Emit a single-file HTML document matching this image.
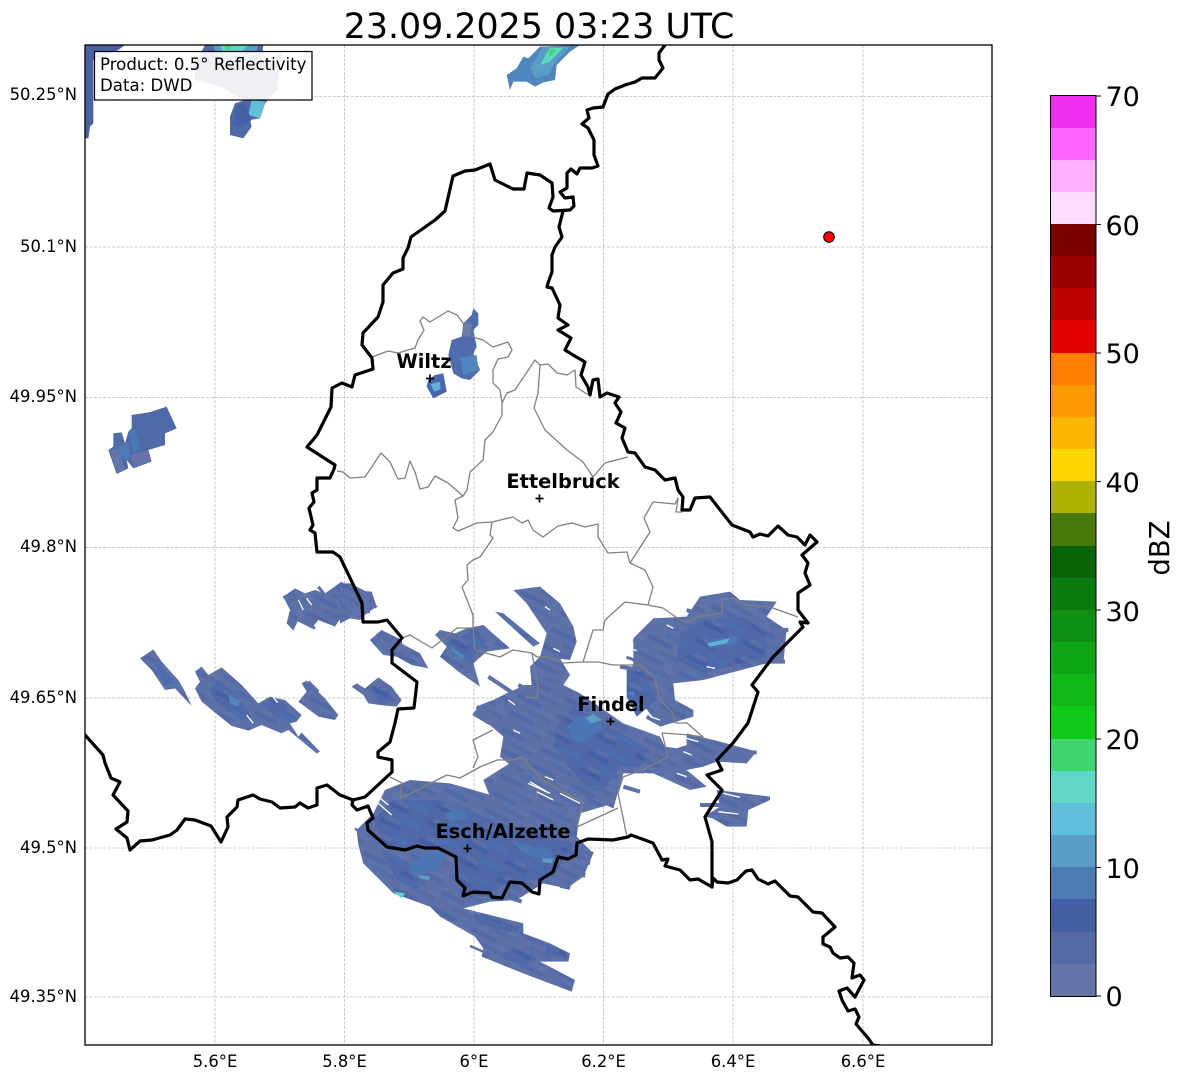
<!DOCTYPE html>
<html><head><meta charset="utf-8"><style>
html,body{margin:0;padding:0;background:#fff;width:1184px;height:1081px;overflow:hidden}
svg{display:block}
text{font-family:"DejaVu Sans","Liberation Sans",sans-serif;fill:#000}
</style></head><body>
<svg width="1184" height="1081" viewBox="0 0 1184 1081" xmlns="http://www.w3.org/2000/svg">
<defs><clipPath id="c"><rect x="85" y="45" width="907" height="1000"/></clipPath>
<pattern id="t" patternUnits="userSpaceOnUse" width="132" height="56" patternTransform="rotate(27)">
<rect width="132" height="56" fill="#5c71a8"/>
<rect x="0" y="0" width="80" height="14" fill="#5369a7"/>
<rect x="50" y="28" width="70" height="14" fill="#556ba6"/>
<rect x="100" y="14" width="30" height="14" fill="#6274a8"/>
</pattern>
<pattern id="d" patternUnits="userSpaceOnUse" width="132" height="56" patternTransform="rotate(27)">
<rect width="132" height="56" fill="#5068a7"/>
<rect x="0" y="0" width="70" height="14" fill="#4660a5"/>
<rect x="60" y="28" width="60" height="14" fill="#4a6fb0"/>
<rect x="20" y="42" width="40" height="14" fill="#5a6fa8"/>
</pattern>
</defs>
<rect width="1184" height="1081" fill="#fff"/>
<text x="539" y="38" font-size="34.800" text-anchor="middle">23.09.2025 03:23 UTC</text>
<g clip-path="url(#c)">
<!-- grid -->
<g stroke="#bbb" stroke-width=".8" stroke-dasharray="3 1.5" fill="none">
<path d="M215 45V1045M344.500 45V1045M474 45V1045M603.500 45V1045M733 45V1045M863 45V1045"/>
<path d="M85 96.500H992M85 247H992M85 397.500H992M85 547.500H992M85 698H992M85 848H992M85 997H992"/>
</g>
<!-- radar: top -->
<g transform="translate(85,40) scale(.33333)">
<path fill="#4a62a4" d="M0 15H120L100 30L25 60V250L15 260L10 295H0Z"/>
<path fill="#4f68a6" d="M360 15H535L530 60L590 40L575 150L540 190L525 235L495 240L500 260L475 295L435 285L435 230L450 190L480 180L440 160L410 140L330 120L330 70Z"/>
<path fill="#5a9dc5" d="M385 15H520L500 70L450 80L400 60Z"/>
<path fill="#60d6c5" d="M405 15H490L460 45L420 50Z"/>
<path fill="#3fd672" d="M412 15H445L430 32Z"/>
<path fill="#62bfdb" d="M500 180L540 185L525 235L490 225Z"/>
<path fill="#4460a6" d="M455 195L480 190L500 240L470 262L440 255Z"/>
</g>
<g transform="translate(340,45) scale(.33333)">
<path fill="#4f86bd" d="M600 5L720 0L690 20L650 60L645 105L610 112L585 125L560 110L520 110L510 135L500 90L530 70L550 35L565 40L590 15Z"/>
<path fill="#5a9dc5" d="M610 5L690 5L640 60L625 90L585 100L570 70Z"/>
<path fill="#60d6c5" d="M630 8L670 8L630 50L600 60Z"/>
<path fill="#3fd672" d="M630 12L650 15L625 38Z"/>
</g>
<!-- radar: wiltz / ettelbruck -->
<g transform="translate(300,290) scale(.33333)">
<path fill="#4f6cac" d="M520 55L535 70L535 105L520 120L530 170L520 190L540 240L510 270L485 265L460 250L445 195L455 150L485 140L490 100L515 75Z"/>
<path fill="#6a80ae" d="M490 100H515L510 140H488Z"/>
<path fill="#4f86bd" d="M480 205L530 195L535 240L490 255Z"/>
<path fill="#4a66ac" d="M405 255L430 250L440 305L400 325L380 290L385 270Z"/>
<path fill="#62b0d8" d="M392 282L420 275L422 298L402 305Z"/>
</g>
<!-- radar: left -->
<g transform="translate(85,400) scale(.33333)">
<path fill="#5069a8" d="M70 150L85 140L85 100L110 97L120 130L130 95L140 85L140 45L190 37L200 35L245 20L275 85L240 100L240 135L190 150L200 185L145 205L125 180L130 205L95 222Z"/>
<path fill="#4a7bb6" d="M100 140L130 130L135 175L110 180Z"/>
<path fill="#4a7bb6" d="M130 95L150 88L165 150L145 158Z"/>
<path fill="#6274a8" d="M75 150L100 145L120 210L95 218Z"/>
<path fill="#6274a8" d="M135 165L190 150L198 185L145 203Z"/>
</g>
<g transform="translate(85,560) scale(.33333)" fill="url(#t)">
<path d="M595 110L630 85L660 100L690 90L720 100L770 65L800 90L860 95L875 140L840 150L830 180L790 140L750 200L700 180L680 205L640 180L625 212L605 190L615 150Z"/>
<path d="M165 295L205 268L230 305L280 360L300 395L320 438L270 385L240 390L200 330Z"/>
<path d="M330 335L350 320L370 345L410 322L470 375L520 430L555 410L600 420L650 465L635 485L615 490L640 530L650 518L705 575L695 580L610 510L590 520L530 495L490 512L440 498L350 425L330 385L345 365Z"/>
<path d="M650 370L665 362L720 415L760 465L750 480L700 470L640 425L665 395Z"/>
<path d="M800 380L815 370L840 385L880 352L920 380L950 420L935 440L885 435L850 430L835 405Z"/>
<path d="M855 240L890 210L950 240L960 290L920 285L895 285Z"/>
<path fill="url(#d)" d="M400 360L450 400L500 470L470 480L400 430L370 390Z"/>
<path fill="#4f86bd" d="M430 405L465 420L460 440L435 430Z"/>
<path fill="url(#d)" d="M530 430L560 420L640 475L620 485L570 470Z"/>
<path fill="url(#d)" d="M210 310L240 330L270 370L240 375Z"/>
<path fill="url(#d)" d="M860 380L900 375L930 425L880 425Z"/>
<path stroke="#fff" stroke-width="4" fill="none" d="M780 105L790 125M640 120L655 150M665 115L680 135M485 465L505 490M560 405L578 428"/>
<path stroke="#5c71a8" stroke-width="9" fill="none" d="M596 108L640 160M625 92L660 130M700 80L735 125M640 180L690 205M815 160L855 155M850 125L875 142M670 365L700 395"/>
</g>
<!-- radar: Esch bridge (under central) -->
<g transform="translate(350,780) scale(.33333)">
<path fill="url(#t)" d="M495 -60L790 70L690 100L680 170L540 60L420 50L400 0Z"/>
</g>
<!-- radar: central and east -->
<g transform="translate(340,560) scale(.33333)" fill="url(#t)">
<path d="M0 70L30 70L80 95L110 140L80 160L60 180L30 175L0 190Z"/>
<path d="M90 240L125 210L165 240L240 280L265 325L215 315L170 290L130 285Z"/>
<path d="M285 225L300 210L345 220L380 205L430 195L510 265L440 275L400 310L420 380L355 335L300 290L320 260Z"/>
<path fill="url(#d)" d="M320 250L400 210L440 240L390 300L340 290Z"/>
<path fill="#4f86bd" d="M335 260L375 290L365 298L330 270Z"/>
<path d="M520 90L600 80L660 130L700 200L710 245L690 300L600 290L620 220L560 130Z"/>
<path d="M465 155L490 160L600 250L580 260Z"/>
<path d="M460 420L500 400L555 375L575 375L570 320L600 290L660 295L690 345L670 375L720 400L850 490L960 530L975 560L1010 565L1040 555L1040 520L1140 545L1250 575L1220 610L1130 605L1090 620L1040 630L1100 680L1050 690L940 640L850 640L820 745L720 700L660 690L600 660L530 630L480 590L490 530L420 470L400 460L420 435Z"/>
<path d="M880 235L940 175L1040 170L1080 110L1170 95L1200 120L1310 125L1280 170L1340 210L1330 310L1280 310L1090 360L1000 370L1005 420L1060 450L1060 470L960 500L860 370L880 310Z"/>
<path d="M1130 690L1290 710L1290 720L1225 750L1220 800L1160 800L1100 765L1140 740Z"/>
<path fill="url(#d)" d="M650 500L700 440L760 470L930 570L900 620L840 620L790 690L740 690L640 560Z"/>
<path fill="#4a76b4" d="M680 500L720 465L780 480L790 505L730 545L700 540Z"/>
<path fill="#5a9dc5" d="M735 475L760 462L785 480L755 490Z"/>
<path fill="url(#d)" d="M1020 220L1080 180L1210 170L1280 220L1280 290L1090 340L1010 300Z"/>
<path fill="#4a76b4" d="M1095 240L1200 225L1190 250L1110 265Z"/>
<path fill="#62b0d8" d="M1100 250L1170 235L1160 250L1110 260Z"/>
<path fill="url(#d)" d="M860 330L900 320L950 420L890 470L860 410Z"/>
<path fill="#4f86bd" d="M865 395L885 395L880 410Z"/>
<path stroke="#5c71a8" stroke-width="12" fill="none" d="M410 440L470 475M400 460L450 490M445 350L520 400M535 375L590 400M640 370L720 410M1040 535L1150 565M1140 572L1250 578M1080 735L1140 735M1100 765L1220 790M850 680L900 695M840 320L900 330M880 240L960 270M860 290L960 330M940 180L1040 210M1040 150L1100 170M1280 210L1345 210M1280 245L1320 245M1290 305L1335 305M920 470L965 495M720 900L750 910M720 935L735 945M660 970L690 985M500 1010L545 1025M660 745L700 760"/>
<path stroke="#fff" stroke-width="4" fill="none" d="M570 665L620 695M615 650L640 660M915 640L970 655M1010 640L1040 650M1150 700L1200 712M1135 755L1195 762M1040 535L1075 545M1030 575L1055 585M930 470L960 480M868 265L890 272M860 285L880 292M1100 320L1125 325M980 195L1000 205M505 420L525 435M520 510L540 520M615 140L630 150M640 265L660 275"/>
</g>
<!-- radar: Esch -->
<g transform="translate(350,780) scale(.33333)">
<path fill="url(#t)" d="M105 30L180 0L300 10L440 50L470 0L540 20L680 170L730 220L700 290L650 325L580 310L500 360L420 365L340 385L520 430L520 460L600 490L660 520L655 545L570 545L675 600L665 635L545 590L395 530L400 505L375 470L270 410L240 380L130 340L40 250L25 195L20 150L70 100Z"/>
<path fill="url(#d)" d="M70 120L130 60L270 60L450 130L670 190L610 290L470 310L400 350L340 340L310 230L250 200L160 210L100 190Z"/>
<path fill="#4a76b4" d="M280 100L340 85L360 115L300 125ZM480 180L600 215L610 250L520 220ZM230 220L290 215L260 270L180 290L170 265Z"/>
<path fill="#5a9dc5" d="M580 235L610 235L605 250L575 245ZM205 285L240 290L235 300L210 295Z"/>
<path fill="#60d6c5" d="M130 335L165 340L155 355Z"/>
<path fill="url(#d)" d="M100 225L170 240L210 330L140 300ZM370 400L510 440L500 460L380 430ZM440 520L560 500L530 560L470 540ZM590 490L650 515L650 540L585 520Z"/>
<path stroke="#5c71a8" stroke-width="7" fill="none" d="M360 498L400 515M15 145L50 175M680 200L730 220M690 240L720 250M680 280L705 290M630 320L655 325"/>
<path stroke="#fff" stroke-width="4" fill="none" d="M535 10L600 40M560 35L610 60M630 40L690 70M85 50L115 75M85 70L125 105"/>
</g>
<!-- district lines -->
<g fill="none" stroke="#808080" stroke-width="1.300" stroke-linejoin="round">
<path d="M372 357L388 351L398 353L415 348L418 340L424 330L420 321L423 317L430 322L448 311L457 315L463 323L473 337L483 340L493 347L508 342L512 350L508 357L498 359L493 370L493 383L500 390L502 403L502 415L493 432L485 440L483 460L470 472L467 490L463 496L455 500L458 518L453 528L458 531L477 523L492 522L513 517L522 523L528 520L533 530L543 537L558 526L572 523L585 527L598 524L598 537L608 553L627 552L630 563L645 570L653 587L648 605L625 602L605 620L603 630L593 630L583 662L563 663L548 657L537 657L532 653L513 650L500 657L475 650L473 628L473 615L462 587L468 580L467 565L473 560L480 557L493 538L490 535L492 522"/>
<path d="M502 403L507 393L515 390L535 360L540 365L548 364L557 373L567 375L575 370L576 387L587 394L591 394"/>
<path d="M540 365L538 393L534 408L545 430L567 450L583 462L593 477L605 463L628 457"/>
<path d="M337 471L343 472L350 478L365 477L381 453L390 462L398 479L405 478L410 461L415 472L420 489L428 487L435 476L448 483L463 496"/>
<path d="M630 563L650 532L644 518L653 502L675 504L678 498L676 512L682 512"/>
<path d="M648 605L663 608L680 620L687 623L697 617L722 613L722 600L733 598L747 605L770 607L798 617"/>
<path d="M473 628L457 628L432 648L410 635L402 638"/>
<path d="M583 662L598 662L613 665L640 665L655 678L660 700L673 713L675 723L687 723L703 737L690 735L662 733L668 757L642 770L623 777L618 793L627 837"/>
<path d="M618 808L577 827L583 803L543 780L522 757L513 760L497 760L480 767L460 778L447 775L427 785L412 793L400 798L402 783L390 777"/>
<path d="M532 653L538 687L537 698L525 697"/>
<path d="M493 730L473 740L478 757L473 768"/>
</g>
<!-- national borders -->
<g fill="none" stroke="#000" stroke-width="3.200" stroke-linejoin="round" stroke-linecap="round">
<path d="M665 45L659 53L659 60L663 68L655 78L642 78L635 82L625 85L615 89L608 94L603 107L593 108L587 110L589 118L582 124L588 128L594 140L594 155L598 166L592 168L580 168L577 174L571 169L567 173L567 188L560 192L565 198L573 197L574 206L570 210L553 211L549 208L553 197L552 183L540 175L527 173L524 189L513 189L495 180L490 164L475 170L465 171L453 176L445 211L435 220L411 237L408 248L403 258L403 269L393 273L383 285L383 302L378 317L363 333L362 345L372 358L373 369L355 375L352 387L342 383L332 388L331 407L317 435L307 447L335 465L334 469L330 478L317 478L317 490L312 493L314 502L309 508L313 525L310 530L315 533L317 552L333 552L340 557L362 603L363 622L378 622L387 620L402 638L392 650L392 663L417 682L414 708L398 709L395 723L390 742L378 752L378 757L392 760L392 772L365 797L353 800L340 795L327 785L317 788L317 805L308 808L300 803L295 807L280 808L272 802L260 799L253 795L238 800L237 807L227 817L228 827L221 842L211 826L195 820L185 819L177 830L170 835L152 840L140 841L130 850L127 838L116 829L127 822L128 811L113 795L120 782L111 778L105 763L103 755L85 735"/>
<path d="M353 800L352 805L357 810L368 806L373 818L367 823L368 830L387 847L405 850L417 846L425 848L438 848L456 857L457 880L465 888L463 896L473 892L490 893L492 897L502 898L510 882L522 883L532 892L539 894L540 880L553 872L558 857L568 859L576 855L577 843L588 839L613 840L628 837L631 835L653 843L662 860L668 859L665 866L680 870L690 880L698 879L712 887L713 878L717 882L728 883L737 880L746 871L752 870L758 879L768 884L775 881L790 896L798 897L813 912L822 913L835 927L823 937L823 944L830 947L833 953L840 958L848 957L854 963L852 978L860 975L864 980L855 997L847 988L839 991L842 1000L848 1011L855 1009L859 1017L856 1024L868 1038L873 1045L880 1046"/>
<path d="M563 211L559 227L562 237L555 247L552 255L552 272L548 283L547 287L552 288L560 305L558 318L568 325L558 330L571 338L565 350L573 355L585 362L581 375L588 387L590 395L593 380L598 379L600 397L607 393L619 397L615 403L621 412L616 423L625 428L622 438L628 452L635 453L645 467L655 470L665 480L675 478L678 490L683 497L682 510L690 510L695 498L710 497L732 525L750 532L753 537L760 534L768 536L778 526L788 535L797 537L805 545L810 535L817 542L802 555L808 563L805 573L810 585L798 593L798 610L808 623L800 622L803 627L773 657L752 685L758 692L748 723L733 743L717 760L722 770L707 775L722 790L705 817L712 842L712 887"/>
</g>
<!-- markers -->
<g stroke="#000" stroke-width="1.700" fill="none">
<path d="M426 378.500H434M430 374.500V382.500M535.500 498.500H543.500M539.500 494.500V502.500M606.500 721.500H614.500M610.500 717.500V725.500M463.500 848.500H471.500M467.500 844.500V852.500"/>
</g>
<circle cx="829" cy="237" r="5.300" fill="#f00" stroke="#000" stroke-width="1"/>
<g font-size="19.400" font-weight="700" text-anchor="middle">
<text x="424" y="368">Wiltz</text>
<text x="563" y="488">Ettelbruck</text>
<text x="611" y="711">Findel</text>
<text x="503" y="838">Esch/Alzette</text>
</g>
<rect x="94.500" y="51.500" width="217.500" height="48.500" fill="#fff" fill-opacity=".9" stroke="#000" stroke-width="1.200"/>
<text x="100" y="70" font-size="16.600">Product: 0.5° Reflectivity</text>
<text x="100" y="91" font-size="16.600">Data: DWD</text>
</g>
<rect x="85" y="45" width="907" height="1000" fill="none" stroke="#000" stroke-width="1.300"/>
<!-- axis labels -->
<g font-size="16.400" text-anchor="end">
<text x="77" y="100">50.25°N</text>
<text x="77" y="252">50.1°N</text>
<text x="77" y="402">49.95°N</text>
<text x="77" y="552">49.8°N</text>
<text x="77" y="703">49.65°N</text>
<text x="77" y="853">49.5°N</text>
<text x="77" y="1002">49.35°N</text>
</g>
<g font-size="16.400" text-anchor="middle">
<text x="215" y="1067">5.6°E</text>
<text x="344.500" y="1067">5.8°E</text>
<text x="474" y="1067">6°E</text>
<text x="603.500" y="1067">6.2°E</text>
<text x="733" y="1067">6.4°E</text>
<text x="863" y="1067">6.6°E</text>
</g>
<!-- colorbar -->
<g shape-rendering="crispEdges">
<rect x="1051" y="96" width="45" height="33" fill="#ee2fee"/>
<rect x="1051" y="128" width="45" height="33" fill="#ff66ff"/>
<rect x="1051" y="160" width="45" height="33" fill="#ffb0ff"/>
<rect x="1051" y="192" width="45" height="33" fill="#ffdcff"/>
<rect x="1051" y="224" width="45" height="33" fill="#7a0000"/>
<rect x="1051" y="256" width="45" height="33" fill="#9a0000"/>
<rect x="1051" y="288" width="45" height="33" fill="#bd0000"/>
<rect x="1051" y="320" width="45" height="33" fill="#e30000"/>
<rect x="1051" y="353" width="45" height="33" fill="#fe7f00"/>
<rect x="1051" y="385" width="45" height="33" fill="#fe9a00"/>
<rect x="1051" y="417" width="45" height="33" fill="#feb700"/>
<rect x="1051" y="449" width="45" height="33" fill="#fed700"/>
<rect x="1051" y="481" width="45" height="33" fill="#adb203"/>
<rect x="1051" y="513" width="45" height="33" fill="#477a0a"/>
<rect x="1051" y="546" width="45" height="33" fill="#086309"/>
<rect x="1051" y="578" width="45" height="33" fill="#0b7a0f"/>
<rect x="1051" y="610" width="45" height="33" fill="#0d8f12"/>
<rect x="1051" y="642" width="45" height="33" fill="#0fa514"/>
<rect x="1051" y="674" width="45" height="33" fill="#10b717"/>
<rect x="1051" y="706" width="45" height="33" fill="#10c919"/>
<rect x="1051" y="739" width="45" height="33" fill="#3fd672"/>
<rect x="1051" y="771" width="45" height="33" fill="#60d6c5"/>
<rect x="1051" y="803" width="45" height="33" fill="#62bfdb"/>
<rect x="1051" y="835" width="45" height="33" fill="#5a9dc5"/>
<rect x="1051" y="867" width="45" height="33" fill="#4b7bb2"/>
<rect x="1051" y="899" width="45" height="33" fill="#445fa3"/>
<rect x="1051" y="932" width="45" height="33" fill="#556ba4"/>
<rect x="1051" y="964" width="45" height="32" fill="#6274a8"/>
</g>
<rect x="1050.500" y="95.500" width="45.500" height="901" fill="none" stroke="#000" stroke-width="1"/>
<path d="M1096 96H1101M1096 224.500H1101M1096 353H1101M1096 481.500H1101M1096 610H1101M1096 739H1101M1096 867.500H1101M1096 996H1101" stroke="#000" stroke-width="1"/>
<g font-size="27">
<text x="1105.500" y="106">70</text>
<text x="1105.500" y="235">60</text>
<text x="1105.500" y="363">50</text>
<text x="1105.500" y="492">40</text>
<text x="1105.500" y="621">30</text>
<text x="1105.500" y="749">20</text>
<text x="1105.500" y="878">10</text>
<text x="1105.500" y="1006">0</text>
</g>
<text transform="translate(1169,548) rotate(-90)" font-size="27.500" text-anchor="middle">dBZ</text>
</svg>
</body></html>
